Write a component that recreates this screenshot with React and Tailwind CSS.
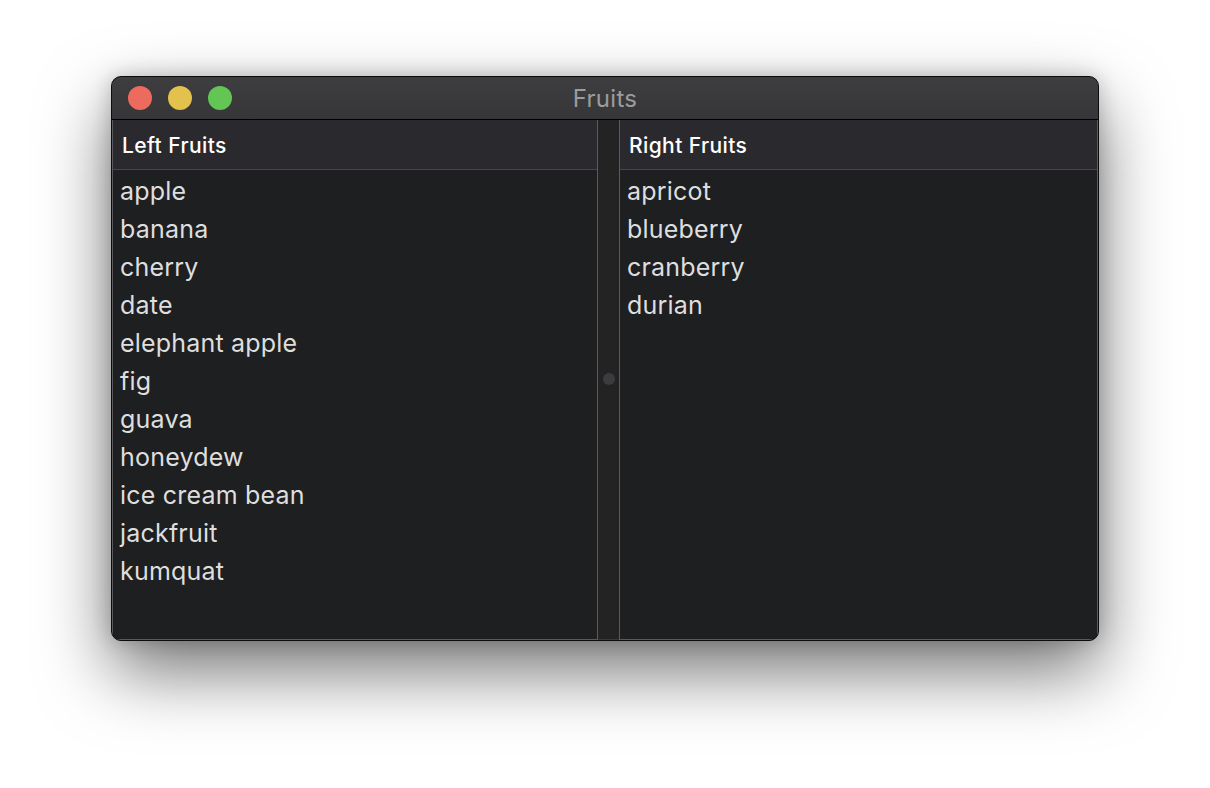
import React from "react";

const leftFruits = [
  "apple",
  "banana",
  "cherry",
  "date",
  "elephant apple",
  "fig",
  "guava",
  "honeydew",
  "ice cream bean",
  "jackfruit",
  "kumquat",
];

const rightFruits = ["apricot", "blueberry", "cranberry", "durian"];

function FruitPanel({ title, items, className }) {
  return (
    <div className={`flex flex-col bg-[#1e1f21] border-b border-[#5a5a5c] ${className}`}>
      <div className="h-[50px] flex items-center pl-[9px] pt-[2px] bg-[#2a2a2e] border-b border-[#47474a] text-[21px] font-medium tracking-[0.4px] text-white">
        {title}
      </div>
      <div className="pt-[3px]">
        {items.map((item) => (
          <div key={item} className="h-[38px] flex items-center pl-[7px] text-[25px] tracking-[0.2px] text-[#dedede]">
            {item}
          </div>
        ))}
      </div>
    </div>
  );
}

export default function App() {
  return (
    <div
      className="w-[1210px] h-[788px] bg-white pt-[76px] pl-[111px]"
      style={{ fontFamily: "Inter, 'Noto Sans', sans-serif" }}
    >
      <div className="w-[988px] h-[565px] rounded-[10px] border border-[#0c0c0c] bg-[#1e1f21] overflow-hidden flex flex-col shadow-[0_30px_70px_rgba(0,0,0,0.55),0_0_20px_rgba(0,0,0,0.2)]">
        {/* title bar */}
        <div className="relative h-[43px] shrink-0 bg-gradient-to-b from-[#3e3e40] to-[#363638] border-b border-black flex items-center">
          <div className="flex items-center gap-[16px] pl-[16px]">
            <span className="w-[24px] h-[24px] rounded-full bg-[#ed6a5e]" />
            <span className="w-[24px] h-[24px] rounded-full bg-[#e2c14c]" />
            <span className="w-[24px] h-[24px] rounded-full bg-[#62c554]" />
          </div>
          <div className="absolute inset-0 flex items-center justify-center pt-[2px] text-[24px] tracking-[0.3px] text-[#9c9c9e]">
            Fruits
          </div>
        </div>

        {/* content */}
        <div className="flex flex-1 border-l border-r border-[#5a5a5c]">
          <FruitPanel title="Left Fruits" items={leftFruits} className="w-[485px] border-r" />
          <div className="w-[21px] bg-[#232324] flex items-center justify-center border-b border-[#3a3a3c]">
            <span className="w-[12px] h-[12px] rounded-full bg-[#3c3c3e] mt-[-2px]" />
          </div>
          <FruitPanel title="Right Fruits" items={rightFruits} className="flex-1 border-l" />
        </div>
      </div>
    </div>
  );
}
